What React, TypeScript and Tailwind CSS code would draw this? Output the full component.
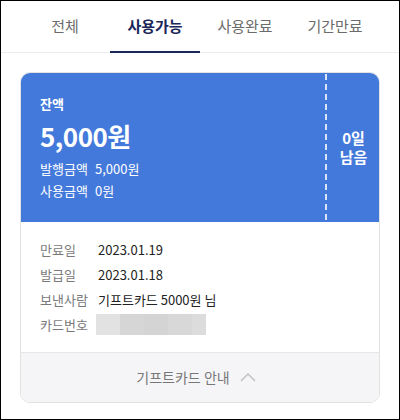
import React from "react";

const tabs = ["전체", "사용가능", "사용완료", "기간만료"];

export default function App() {
  return (
    <div
      className="w-[400px] h-[420px] border border-black bg-white overflow-hidden"
      style={{ fontFamily: '"Noto Sans CJK KR", "Noto Sans", sans-serif' }}
    >
      <div className="h-[52px] border-b border-[#ececec] px-[19px] grid grid-cols-4">
        {tabs.map((t, i) => (
          <div
            key={t}
            className={
              i === 1
                ? "flex items-center justify-center text-[15px] font-bold text-[#1b2759] border-b-2 border-[#1b2759] mb-[-1px] pt-[1px]"
                : "flex items-center justify-center text-[15px] text-[#6b6b6b] pb-[1px]"
            }
          >
            {t}
          </div>
        ))}
      </div>

      <div className="mx-[19px] mt-[19px] rounded-[10px] border border-[#e2e2e2] overflow-hidden">
        <div className="bg-[#4379db] h-[150px] -mx-px -mt-px flex text-white">
          <div className="flex-1 pl-[20px]">
            <div className="pt-[22px] text-[13px] leading-[19px] font-bold">잔액</div>
            <div className="mt-[6px] text-[26px] leading-[34px] font-bold tracking-[-0.5px]">5,000원</div>
            <div className="mt-[5px] text-[13px] leading-[22px] flex">
              <span className="w-[55px]">발행금액</span>
              <span>5,000원</span>
            </div>
            <div className="text-[13px] leading-[22px] flex">
              <span className="w-[55px]">사용금액</span>
              <span>0원</span>
            </div>
          </div>
          <svg width="2" height="150" className="block shrink-0">
            <line x1="1" y1="2" x2="1" y2="150" stroke="white" strokeWidth="1.6" strokeDasharray="6 4" />
          </svg>
          <div className="w-[53px] flex flex-col items-center justify-center text-[15px] leading-[19px] font-bold">
            <span>0일</span>
            <span>남음</span>
          </div>
        </div>

        <div className="pl-[19px] pt-[15px] pb-[15px] text-[13px] leading-[25px]">
          <div className="flex">
            <span className="w-[58px] text-[#7a7a7a]">만료일</span>
            <span className="text-[#222]">2023.01.19</span>
          </div>
          <div className="flex">
            <span className="w-[58px] text-[#7a7a7a]">발급일</span>
            <span className="text-[#222]">2023.01.18</span>
          </div>
          <div className="flex">
            <span className="w-[58px] text-[#7a7a7a]">보낸사람</span>
            <span className="text-[#222]">기프트카드 5000원 님</span>
          </div>
          <div className="flex items-center">
            <span className="w-[56px] text-[#7a7a7a]">카드번호</span>
            <div className="flex h-[21px] w-[110px]">
              <div className="w-[24px] bg-[#e2e2e2]" />
              <div className="w-[24px] bg-[#d6d6d6]" />
              <div className="w-[24px] bg-[#d4d4d4]" />
              <div className="w-[24px] bg-[#d8d8d8]" />
              <div className="w-[14px] bg-[#dcdcdc]" />
            </div>
          </div>
        </div>

        <div className="h-[50px] border-t border-[#e6e6e6] bg-[#f5f5f7] flex items-center justify-center gap-[10px] pr-[8px]">
          <span className="text-[14px] text-[#777]">기프트카드 안내</span>
          <svg width="16" height="10" viewBox="0 0 16 10" className="mt-[-1px]">
            <polyline points="1,9 8,2 15,9" fill="none" stroke="#bdbdbd" strokeWidth="1.3" />
          </svg>
        </div>
      </div>
    </div>
  );
}
